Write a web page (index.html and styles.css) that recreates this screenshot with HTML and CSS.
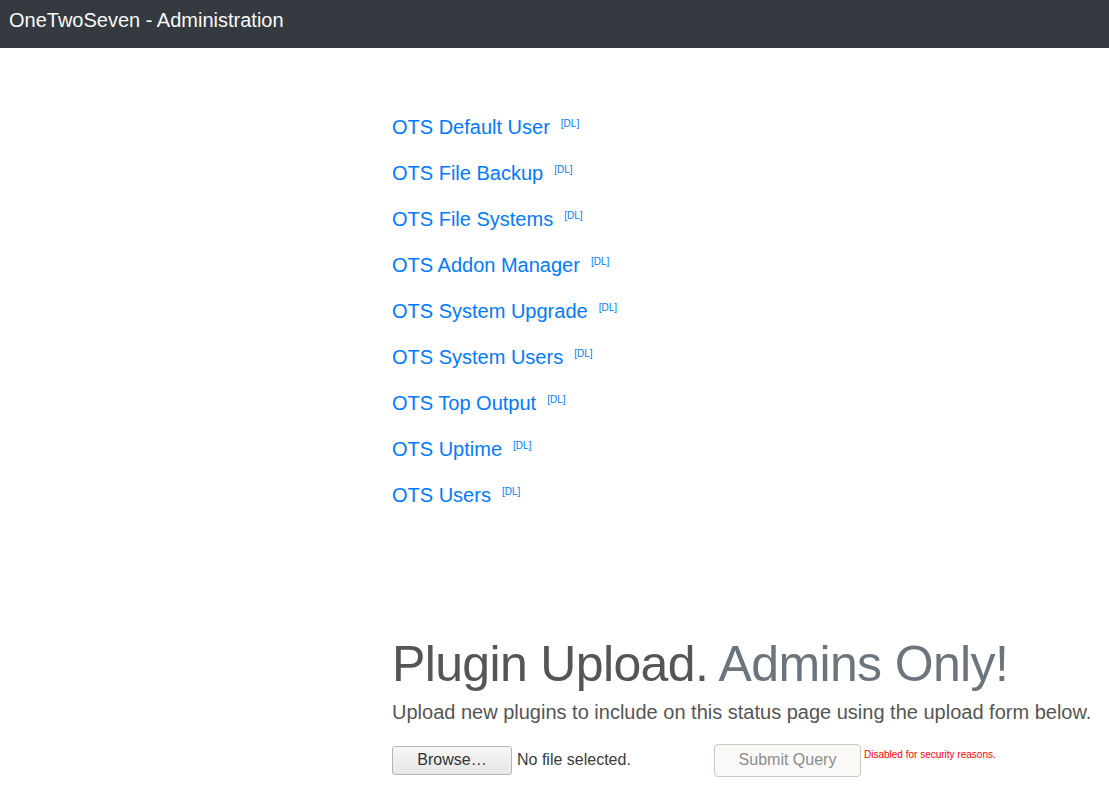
FILE: index.html
```html
<!DOCTYPE html>
<html>
<head>
<meta charset="utf-8">
<link rel="stylesheet" href="styles.css">
</head>
<body>
<nav class="navbar"><span class="brand">OneTwoSeven - Administration</span></nav>
<main class="content">
  <ul class="plugins">
    <li><a href="#">OTS Default User</a><sup class="dl"><a href="#">[DL]</a></sup></li>
    <li><a href="#">OTS File Backup</a><sup class="dl"><a href="#">[DL]</a></sup></li>
    <li><a href="#">OTS File Systems</a><sup class="dl"><a href="#">[DL]</a></sup></li>
    <li><a href="#">OTS Addon Manager</a><sup class="dl"><a href="#">[DL]</a></sup></li>
    <li><a href="#">OTS System Upgrade</a><sup class="dl"><a href="#">[DL]</a></sup></li>
    <li><a href="#">OTS System Users</a><sup class="dl"><a href="#">[DL]</a></sup></li>
    <li><a href="#">OTS Top Output</a><sup class="dl"><a href="#">[DL]</a></sup></li>
    <li><a href="#">OTS Uptime</a><sup class="dl"><a href="#">[DL]</a></sup></li>
    <li><a href="#">OTS Users</a><sup class="dl"><a href="#">[DL]</a></sup></li>
  </ul>
  <h1 class="display">Plugin Upload. <span class="muted">Admins Only!</span></h1>
  <p class="lead">Upload new plugins to include on this status page using the upload form below.</p>
  <form class="upload">
    <span class="file">
      <span class="browse">Browse…</span>
      <span class="filename">No file selected.</span>
    </span>
    <span class="submit">Submit Query</span>
    <span class="warn">Disabled for security reasons.</span>
  </form>
</main>
</body>
</html>
```
FILE: styles.css
```css
* { box-sizing: border-box; }
html, body { margin: 0; padding: 0; }
body {
  font-family: "Liberation Sans", Arial, sans-serif;
  color: #212529;
  background: #fff;
}
.navbar {
  height: 48px;
  background: #343a40;
  display: flex;
  align-items: center;
  padding: 0 9px;
}
.brand {
  color: #f8f9fa;
  font-size: 20px;
  line-height: 30px;
  margin-top: -8px;
}
.content {
  padding-left: 392px;
}
.plugins {
  list-style: none;
  margin: 64px 0 0;
  padding: 0;
}
.plugins li {
  font-size: 20px;
  line-height: 30px;
  height: 30px;
  margin-bottom: 16px;
}
.plugins a {
  color: #007bff;
  text-decoration: none;
}
.dl {
  font-size: 10px;
  line-height: 0;
  margin-left: 11px;
  vertical-align: 0;
  position: relative;
  top: -7px;
}
.display {
  font-size: 50px;
  font-weight: 300;
  line-height: 60px;
  color: #555555;
  margin: 124px 0 3px;
  letter-spacing: -0.65px;
}
.muted { color: #6c757d; }
.lead {
  font-size: 20px;
  font-weight: 300;
  line-height: 30px;
  color: #555555;
  margin: 0;
}
.upload {
  display: flex;
  align-items: center;
  margin-top: 16px;
  height: 34px;
}
.file {
  display: flex;
  align-items: center;
  width: 322px;
}
.browse {
  width: 120px;
  height: 29px;
  border: 1px solid #b8b5b2;
  border-radius: 3px;
  background: linear-gradient(#f7f6f5, #e8e6e4);
  font-size: 16px;
  color: #2e3436;
  display: flex;
  align-items: center;
  justify-content: center;
}
.filename {
  margin-left: 5px;
  font-size: 16px;
  color: #3b3b3b;
}
.submit {
  width: 147px;
  height: 33px;
  border: 1px solid #cdc7c2;
  border-radius: 4px;
  background: #faf9f8;
  color: #8b8e8f;
  font-size: 16px;
  display: flex;
  align-items: center;
  justify-content: center;
}
.warn {
  color: #ff0000;
  font-size: 10px;
  margin-left: 3px;
  align-self: flex-start;
  margin-top: 6px;
}
```
